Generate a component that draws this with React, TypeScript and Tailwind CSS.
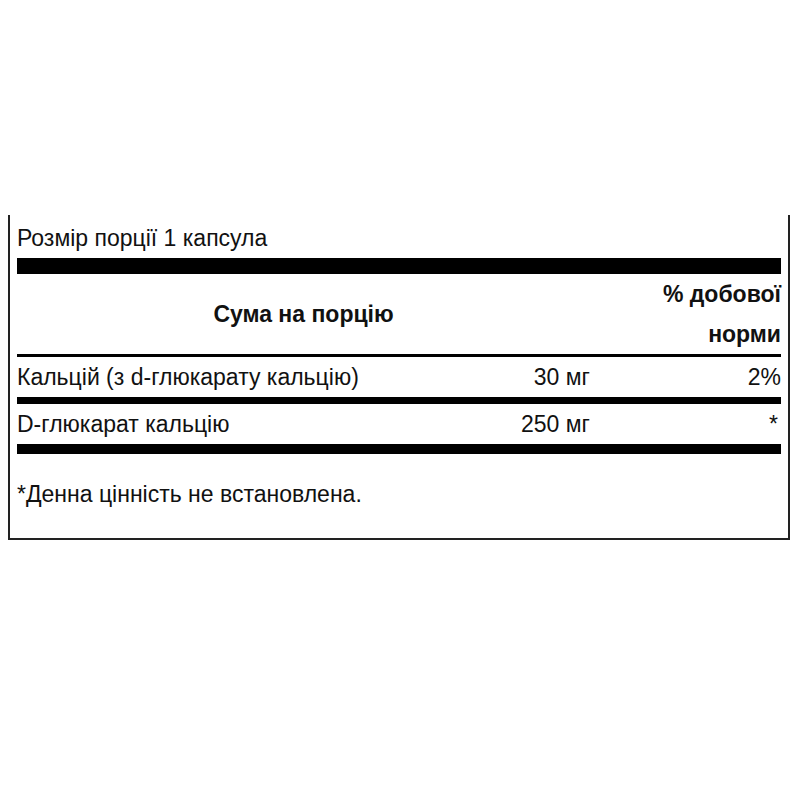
export default function App() {
  const font = { fontFamily: '"Liberation Sans", Arial, sans-serif' };
  return (
    <div className="w-[800px] h-[800px] bg-white" style={font}>
      <div className="h-[215px]" />
      <div className="ml-[8px] w-[782px] border-l-2 border-r-2 border-b-2 border-[#222] px-[7px] pt-[3px] text-[23px] text-[#111]">
        <div className="leading-[40px]">Розмір порції 1 капсула</div>
        <div className="h-[16px] bg-black" />
        <div className="grid grid-cols-[1fr_191px] leading-[40px]">
          <div className="flex items-center justify-center font-bold">Сума на порцію</div>
          <div className="flex justify-end">
            <div className="w-[130px] text-right font-bold">% добової норми</div>
          </div>
        </div>
        <div className="h-[3px] bg-black" />
        <div className="grid grid-cols-[1fr_150px_191px] leading-[40px]">
          <div>Кальцій (з d-глюкарату кальцію)</div>
          <div className="text-right">30 мг</div>
          <div className="text-right">2%</div>
        </div>
        <div className="h-[7px] bg-black" />
        <div className="grid grid-cols-[1fr_150px_191px] leading-[40px]">
          <div>D-глюкарат кальцію</div>
          <div className="text-right">250 мг</div>
          <div className="text-right pr-[3px]">*</div>
        </div>
        <div className="h-[10px] bg-black" />
        <div className="pt-[20px] pb-[24px] leading-[40px]">*Денна цінність не встановлена.</div>
      </div>
    </div>
  );
}
